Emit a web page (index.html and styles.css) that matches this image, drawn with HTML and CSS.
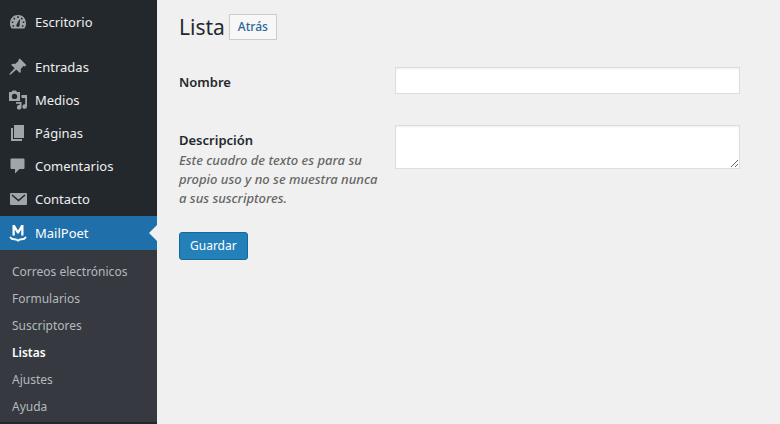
FILE: index.html
```html
<!DOCTYPE html>
<html lang="es">
<head>
<meta charset="utf-8">
<title>Lista</title>
<link rel="stylesheet" href="styles.css">
</head>
<body>
<div class="admin">
  <nav class="sidebar" aria-label="Menú principal">
    <ul class="menu">
      <li class="menu-first"><a class="menu-link" href="#">
        <svg class="icon" viewBox="0 0 20 20"><path fill="currentColor" fill-rule="evenodd" d="M3.800 16.500h12.400c1.100-1.400 1.800-3.200 1.800-5.100C18 6.500 14.600 3 10 3S2 6.500 2 11.400c0 1.900.7 3.700 1.800 5.100zM9.200 4.300h1.600v1.600H9.200zM5.500 5.800h1.600v1.600H5.500zM12.900 5.800h1.600v1.600h-1.600zM3.700 9.500h1.600v1.600H3.700zM14.700 9.500h1.600v1.600h-1.600zM11.300 7.500l.8.300-.5 4.200c.5 1.800-.5 3-1.600 3-1.300 0-2.200-1.500-1.300-2.800zM4.500 13.300h1.600v1.500H4.500zM13.900 13.300h1.600v1.500h-1.600z"/></svg>
        Escritorio</a></li>
      <li><a class="menu-link" href="#">
        <svg class="icon" viewBox="0 0 20 20"><path fill="currentColor" d="M10.400 3.100l1.400-1.500 6.500 6.500-1.500 1.400-1.500-.5-2.700 3.200c.5 1.400.3 2.800-.7 3.900l-3.600-3.600-5.200 4.800L1.200 18l.8-1.700 4.700-5-3.600-3.600c1.100-1 2.500-1.200 3.900-.7l3.300-2.700z"/></svg>
        Entradas</a></li>
      <li><a class="menu-link" href="#">
        <svg class="icon" viewBox="0 0 20 20"><path fill="currentColor" fill-rule="evenodd" d="M1 2h2.500l1-1.500h3.500L9 2h3v9H1zM6.500 3.700a2.700 2.700 0 1 0 0 5.400 2.700 2.700 0 0 0 0-5.400z"/><path fill="currentColor" d="M13.500 5H19v11.500a2.300 2.300 0 1 1-1.800-2.200V8h-3.700zM8 12h5.500v5.200a2.300 2.300 0 1 1-1.800-2.200v-1.200H8z"/></svg>
        Medios</a></li>
      <li><a class="menu-link" href="#">
        <svg class="icon" viewBox="0 0 20 20"><path fill="currentColor" d="M6 2h10v13H6zM3 5h2v11h9v2H3z"/></svg>
        Páginas</a></li>
      <li><a class="menu-link" href="#">
        <svg class="icon" viewBox="0 0 20 20"><path fill="currentColor" d="M3.500 2.500h12q1 0 1 1v8.500q0 1-1 1h-4l-4.500 4.500V13H3.500q-1 0-1-1V3.500q0-1 1-1z"/></svg>
        Comentarios</a></li>
      <li><a class="menu-link" href="#">
        <svg class="icon" viewBox="0 0 20 20"><path fill="currentColor" d="M3 4h15q1 0 1 1v10q0 1-1 1H3q-1 0-1-1V5q0-1 1-1z"/><path fill="none" stroke="#23282d" stroke-width="1.600" d="M4 6l6.500 5.500L17 6"/></svg>
        Contacto</a></li>
      <li class="menu-current"><a class="menu-link" href="#">
        <svg class="icon" viewBox="0 0 20 20"><path fill="currentColor" d="M4.500 12.500V2h2.300L10 7.500 13.200 2h2.300v10.500h-2.300V6.500L10.800 10.500H9.200L6.800 6.500v6z"/><path fill="none" stroke="currentColor" stroke-width="1.900" stroke-linecap="round" stroke-linejoin="round" d="M2.500 14.500q1 1.700 3.700 1.700 2.700 0 3.800 1.500 1.100-1.500 3.800-1.500 2.700 0 3.700-1.700"/></svg>
        MailPoet</a>
        <ul class="submenu">
          <li><a href="#">Correos electrónicos</a></li>
          <li><a href="#">Formularios</a></li>
          <li><a href="#">Suscriptores</a></li>
          <li><a class="selected" href="#" aria-current="page">Listas</a></li>
          <li><a href="#">Ajustes</a></li>
          <li><a href="#">Ayuda</a></li>
        </ul>
      </li>
    </ul>
  </nav>
  <main class="content">
    <header class="heading">
      <h1>Lista</h1>
      <a class="back" href="#">Atrás</a>
    </header>
    <form>
      <div class="row">
        <div class="caption"><label for="name">Nombre</label></div>
        <input class="field" id="name" type="text">
      </div>
      <div class="row">
        <div class="caption">
          <label for="description">Descripción</label>
          <p class="hint" id="hint">Este cuadro de texto es para su propio uso y no se muestra nunca a sus suscriptores.</p>
        </div>
        <textarea class="field" id="description" aria-describedby="hint"></textarea>
      </div>
      <button class="save" type="submit">Guardar</button>
    </form>
  </main>
</div>
</body>
</html>
```

FILE: styles.css
```css
* { box-sizing: border-box; }

body {
  margin: 0;
  background: #f0f0f0;
  color: #23282d;
  font: 13px/18px "Segoe UI", "Noto Sans", sans-serif;
}

a { text-decoration: none; }

.admin {
  display: flex;
  min-height: 100vh;
}

.sidebar {
  flex: none;
  width: 157px;
  background: #23282d;
}

.menu,
.submenu {
  margin: 0;
  padding: 0;
  list-style: none;
}

.menu { padding-top: 5px; }

.menu-first { margin-bottom: 12px; }

.menu-link {
  display: flex;
  align-items: center;
  gap: 7px;
  height: 33px;
  padding-left: 8px;
  color: #eee;
}

.icon {
  flex: none;
  width: 20px;
  height: 20px;
  color: #a0a5aa;
}

.menu-current { margin-top: 1px; }

.menu-current .menu-link {
  position: relative;
  height: 34px;
  background: #1f70aa;
  color: #fff;
}

.menu-current .icon { color: #fff; }

.menu-current .menu-link::after {
  content: "";
  position: absolute;
  top: 9px;
  right: 0;
  border: 8px solid transparent;
  border-left-width: 0;
  border-right-color: #f0f0f0;
}

.submenu {
  padding: 8px 0 2px;
  background: #363a40;
}

.submenu a {
  display: block;
  padding-left: 12px;
  color: #b4b9be;
  font-size: 12px;
  line-height: 27px;
}

.submenu .selected {
  color: #fff;
  font-weight: 600;
}

.content {
  flex: 1;
  padding: 14px 40px 20px 22px;
}

.heading {
  display: flex;
  align-items: center;
  gap: 4px;
  margin-bottom: 27px;
}

h1 {
  margin: 0;
  font-size: 21px;
  font-weight: 400;
  line-height: 26px;
}

.back {
  padding: 3px 8px;
  border: 1px solid #ccc;
  background: #f7f7f7;
  color: #2b659b;
  font-size: 12px;
  font-weight: 500;
}

.row {
  display: grid;
  grid-template-columns: 200px 1fr;
  column-gap: 16px;
  align-items: start;
  margin-bottom: 24px;
}

.caption {
  padding-top: 6px;
  font-weight: 600;
}

.hint {
  margin: 2px 0 0;
  color: #666;
  font-style: italic;
  font-weight: 500;
  line-height: 19px;
}

.field {
  width: 100%;
  height: 27px;
  margin: 0;
  padding: 3px 5px;
  border: 1px solid #ddd;
  background: #fff;
  box-shadow: inset 0 1px 2px #00000012;
  color: #32373c;
  font: inherit;
}

textarea.field {
  height: 44px;
  resize: vertical;
}

.row + .row { padding-top: 7px; }

.save {
  height: 28px;
  padding: 0 10px;
  border: 1px solid #176799;
  border-radius: 3px;
  background: #2480b9;
  color: #fff;
  font: inherit;
  font-size: 12px;
}
```
